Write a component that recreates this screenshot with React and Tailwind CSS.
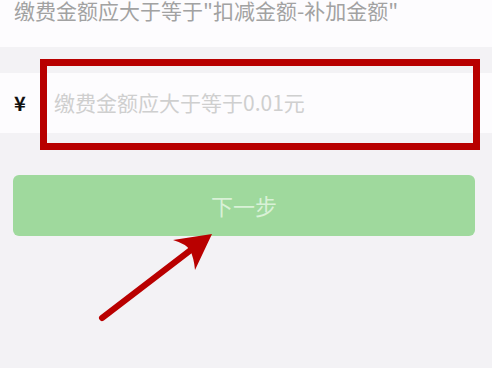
import React from "react";

const font = { fontFamily: '"Noto Sans CJK SC", "Noto Sans", sans-serif' };

const Arrow = () => (
  <svg
    className="pointer-events-none absolute left-0 top-0"
    width="492"
    height="368"
    viewBox="0 0 492 368"
  >
    <line
      x1="102"
      y1="318"
      x2="196"
      y2="246"
      stroke="#b90000"
      strokeWidth="6"
      strokeLinecap="round"
    />
    <path d="M212 234 L173 240 Q186 244 190 250 Q194 258 195 270 Z" fill="#b90000" />
  </svg>
);

const App = () => {
  return (
    <div
      className="relative flex h-[368px] w-full flex-col overflow-hidden bg-[#f3f2f5]"
      style={font}
    >
      <div className="flex h-[47px] shrink-0 items-start bg-[#fdfcfe] px-[14px]">
        <p className="-mt-[2px] whitespace-nowrap text-[21px] leading-[24px] text-[#a2a2a2]">
          缴费金额应大于等于"扣减金额-补加金额"
        </p>
      </div>

      <div className="mt-[26px] flex h-[60px] shrink-0 items-center bg-[#fdfcfe] px-[14px]">
        <span className="w-[40px] text-[20px] font-semibold text-[#111]">¥</span>
        <span className="whitespace-nowrap text-[21px] text-[#cfcfcf]">
          缴费金额应大于等于0.01元
        </span>
      </div>

      <div className="mt-[42px] pl-[13px] pr-[17px]">
        <button className="flex h-[61px] w-full items-center justify-center rounded-[6px] bg-[#9fd99d] text-[22px] text-[#d9f1d7]">
          下一步
        </button>
      </div>

      <div className="absolute left-[40px] top-[59px] h-[91px] w-[440px] border-[7px] border-[#b80000]" />
      <Arrow />
    </div>
  );
};

export default App;
